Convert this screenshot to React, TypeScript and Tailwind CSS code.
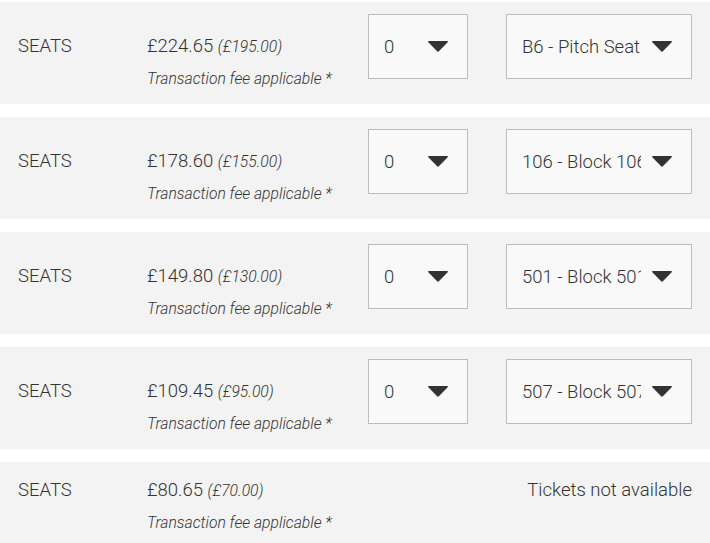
import React from 'react';

interface TicketRow {
  price: string;
  original: string;
  seat?: string;
}

const rows: TicketRow[] = [
  { price: '£224.65', original: '(£195.00)', seat: 'B6 - Pitch Seat' },
  { price: '£178.60', original: '(£155.00)', seat: '106 - Block 106' },
  { price: '£149.80', original: '(£130.00)', seat: '501 - Block 501' },
  { price: '£109.45', original: '(£95.00)', seat: '507 - Block 507' },
  { price: '£80.65', original: '(£70.00)' },
];

const Caret = () => (
  <svg width="20" height="11" viewBox="0 0 20 11" className="shrink-0">
    <path d="M0.8 0h18.4c0.7 0 1 0.8 0.5 1.3L10.6 10.6c-0.3 0.3-0.9 0.3-1.2 0L0.3 1.3C-0.2 0.8 0.1 0 0.8 0z" fill="#333333" />
  </svg>
);

const FakeSelect = ({ value, className }: { value: string; className: string }) => (
  <div
    className={`flex h-[65px] shrink-0 items-center border border-[#bdbdbd] bg-[#f9f9f9] pl-[15px] pr-[19px] ${className}`}
  >
    <span className="min-w-0 flex-1 overflow-hidden whitespace-nowrap text-[18.5px] leading-6">{value}</span>
    <span className="ml-[11px]">
      <Caret />
    </span>
  </div>
);

const App = () => {
  return (
    <div
      className="flex w-[710px] flex-col gap-[13px] bg-white pt-[2px] font-light text-[#333333]"
      style={{ fontFamily: 'Roboto, "Liberation Sans", sans-serif' }}
    >
      {rows.map((row) => (
        <div
          key={row.price}
          className={`flex items-start bg-[#f3f3f3] px-[18px] ${row.seat ? 'h-[102px] pt-3' : 'h-[90px] pt-4'}`}
        >
          <div className={`w-[129px] shrink-0 text-[18.5px] leading-6 ${row.seat ? 'pt-[20px]' : ''}`}>SEATS</div>
          <div className={`w-[221px] shrink-0 ${row.seat ? 'pt-[20px]' : ''}`}>
            <p className="whitespace-nowrap text-[18.5px] leading-6">
              {row.price} <span className="text-[15.7px] italic">{row.original}</span>
            </p>
            <p className="mt-[10px] whitespace-nowrap text-[15.7px] leading-5 italic">Transaction fee applicable *</p>
          </div>
          {row.seat ? (
            <div className="flex flex-1 gap-[38px]">
              <FakeSelect value="0" className="w-[100px]" />
              <FakeSelect value={row.seat} className="w-[186px]" />
            </div>
          ) : (
            <p className="flex-1 text-right text-[18.5px] leading-6">Tickets not available</p>
          )}
        </div>
      ))}
    </div>
  );
};

export default App;
